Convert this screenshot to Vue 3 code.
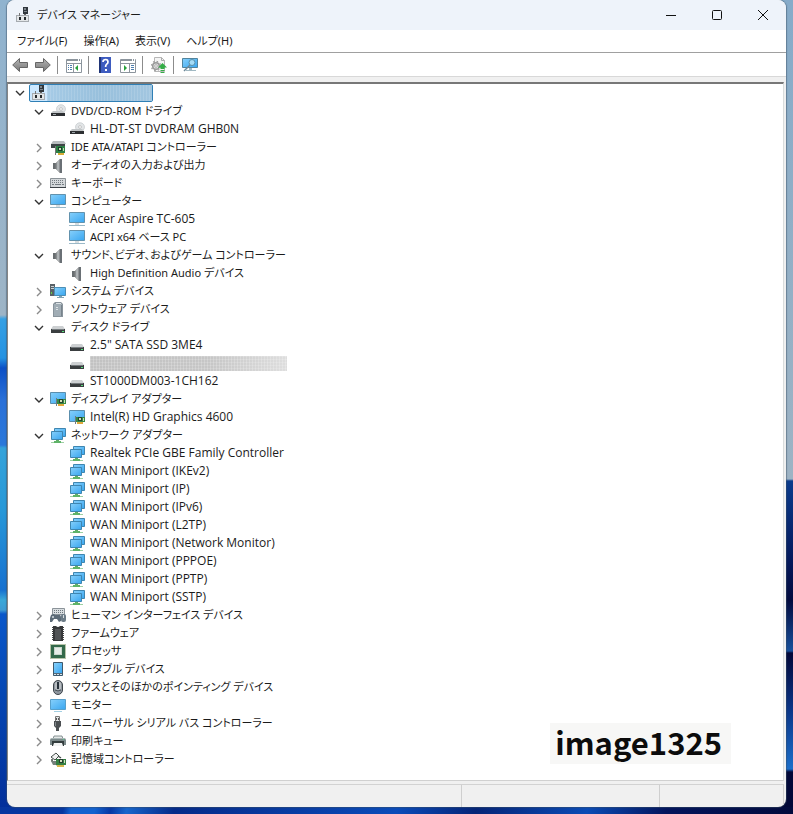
<script setup>
import { ref } from 'vue'

const menus = ['ファイル(F)', '操作(A)', '表示(V)', 'ヘルプ(H)']

const wan = ['IKEv2', 'IP', 'IPv6', 'L2TP', 'Network Monitor', 'PPPOE', 'PPTP', 'SSTP']

const groups = ref([
  { name: 'DVD/CD-ROM ドライブ', icon: 'optical', open: true, items: ['HL-DT-ST DVDRAM GHB0N'] },
  { name: 'IDE ATA/ATAPI コントローラー', icon: 'ide' },
  { name: 'オーディオの入力および出力', icon: 'speaker' },
  { name: 'キーボード', icon: 'keyboard' },
  { name: 'コンピューター', icon: 'computer', open: true, items: ['Acer Aspire TC-605', 'ACPI x64 ベース PC'] },
  { name: 'サウンド、ビデオ、およびゲーム コントローラー', icon: 'speaker', open: true, items: ['High Definition Audio デバイス'] },
  { name: 'システム デバイス', icon: 'system' },
  { name: 'ソフトウェア デバイス', icon: 'software' },
  { name: 'ディスク ドライブ', icon: 'disk', open: true, items: ['2.5" SATA SSD 3ME4', '', 'ST1000DM003-1CH162'] },
  { name: 'ディスプレイ アダプター', icon: 'display', open: true, items: ['Intel(R) HD Graphics 4600'] },
  {
    name: 'ネットワーク アダプター',
    icon: 'network',
    open: true,
    items: ['Realtek PCIe GBE Family Controller', ...wan.map((n) => `WAN Miniport (${n})`)],
  },
  { name: 'ヒューマン インターフェイス デバイス', icon: 'hid' },
  { name: 'ファームウェア', icon: 'firmware' },
  { name: 'プロセッサ', icon: 'cpu' },
  { name: 'ポータブル デバイス', icon: 'portable' },
  { name: 'マウスとそのほかのポインティング デバイス', icon: 'mouse' },
  { name: 'モニター', icon: 'monitor' },
  { name: 'ユニバーサル シリアル バス コントローラー', icon: 'usb' },
  { name: '印刷キュー', icon: 'printer' },
  { name: '記憶域コントローラー', icon: 'storage' },
])

const rootOpen = ref(true)

// Purely Latin names are set one size larger than Japanese ones.
const isLatin = (text) => /^[\x20-\x7e]+$/.test(text)
</script>

<template>
  <svg class="defs" aria-hidden="true">
    <defs>
      <linearGradient id="screen" x1="0" y1="0" x2="1" y2="1">
        <stop offset="0" stop-color="#86d0fb" /><stop offset="1" stop-color="#39a6f0" />
      </linearGradient>
      <linearGradient id="metal" x1="0" y1="0" x2="1" y2="0">
        <stop offset="0" stop-color="#6c7174" /><stop offset=".5" stop-color="#c3c8ca" /><stop offset="1" stop-color="#777c80" />
      </linearGradient>
      <linearGradient id="arrow" x1="0" y1="0" x2="0" y2="1">
        <stop offset="0" stop-color="#b5b5b5" /><stop offset="1" stop-color="#777" />
      </linearGradient>
      <symbol id="manager" viewBox="0 0 16 16">
        <path d="M8 0h5v7H8z" fill="#30363c" /><path d="M9 1h2v2H9zM9 4h3v1H9z" fill="#7d858c" /><path d="M9 7h2v2H9z" fill="#666" />
        <path d="M1 8h13v7H1z" fill="#e3e6e8" /><path d="M1 8h13v1H1zM1 14h13v1H1zM1 8h1v7H1zM13 8h1v7h-1z" fill="#a6abb0" />
        <path d="M4 10h2v3H4zM9 10h2v3H9z" fill="#24292d" /><path d="M4 6h1v3H4z" fill="#777" />
      </symbol>
      <symbol id="optical" viewBox="0 0 16 16">
        <ellipse cx="11" cy="5" rx="4.500" ry="4.300" fill="#e2e5e7" stroke="#c4c9cc" stroke-width=".7" />
        <circle cx="11" cy="5" r="1.400" fill="#fff" stroke="#999" stroke-width=".5" />
        <path d="M3 7h10l2 2H1z" fill="#c2c6c8" /><path d="M1 9h14v3H1z" fill="#2c2f32" /><path d="M3 10h3v1H3z" fill="#9da4a8" />
      </symbol>
      <symbol id="ide" viewBox="0 0 16 16">
        <path d="M3 1h11l2 3H1z" fill="#b9bdbf" /><path d="M1 4h14v4H1z" fill="#3e4547" />
        <path d="M6 6h9v7H6z" fill="#2b8144" /><path d="M8 7h4v4H8z" fill="#1a3e29" /><path d="M9 8h2v2H9zM13 8h1v3h-1z" fill="#c9dbb7" />
        <path d="M8 13h6v2H8z" fill="#d7ac36" /><path d="M5 6h1v9H5z" fill="#777" />
      </symbol>
      <symbol id="speaker" viewBox="0 0 16 16">
        <path d="M3 5h3v6H3z" fill="#686d70" /><path d="M6 5l4-4v14l-4-4z" fill="url(#metal)" stroke="#999" stroke-width=".5" />
        <path d="M10 1h2v14h-2z" fill="#6a7075" />
      </symbol>
      <symbol id="keyboard" viewBox="0 0 16 16">
        <path d="M.5 2.500h15v9H.5z" fill="#d4d8db" stroke="#8b9297" />
        <path d="M2 4.500h12M2 6.500h12" stroke="#737b81" stroke-dasharray="1 1" /><path d="M2 8.500h2M5 8.500h6M12 8.500h2" stroke="#737b81" />
        <path d="M0 11h16v1H0z" fill="#3d4349" />
      </symbol>
      <symbol id="computer" viewBox="0 0 16 16">
        <path d="M.5.500h15v10H.5z" fill="url(#screen)" stroke="#6292ad" /><path d="M6 11h4v2H6z" fill="#d7dde0" /><path d="M0 13h16v1H0z" fill="#9bb9c8" />
      </symbol>
      <symbol id="system" viewBox="0 0 16 16">
        <path d="M0 0h5v12H0z" fill="#596167" /><path d="M1 2h3v1H1zM1 4h3v1H1z" fill="#c9d0d3" /><path d="M1 8h1v2H1z" fill="#62cf48" />
        <path d="M4.500 3.500h11v8h-11z" fill="url(#screen)" stroke="#4d8fb5" /><path d="M9 12h3v1H9zM7 13h7v1H7z" fill="#82a4b5" />
      </symbol>
      <symbol id="software" viewBox="0 0 16 16">
        <path d="M5 0h6l2 2v13H3V2z" fill="#89949c" /><path d="M4 2h8v12H4z" fill="#a1adb5" /><path d="M6 1h5v1H6zM6 5h2v1H6zM6 7h2v1H6z" fill="#dce2e5" /><path d="M11 3h1v11h-1z" fill="#77838c" />
      </symbol>
      <symbol id="disk" viewBox="0 0 16 16">
        <path d="M3 6h10l2 3H1z" fill="#cdd0d2" /><path d="M1 9h14v4H1z" fill="#3a3e40" /><path d="M2 9h12v1H2z" fill="#757b7e" /><path d="M12 11h2v1h-2z" fill="#57df7a" />
      </symbol>
      <symbol id="display" viewBox="0 0 16 16">
        <path d="M.5.500h15v11H.5z" fill="url(#screen)" stroke="#5a8ead" /><path d="M6 6h1v8H6z" fill="#717b82" />
        <path d="M7 7h9v5H7z" fill="#348945" /><path d="M9 7h4v4H9z" fill="#24452f" /><path d="M10 8h2v2h-2zM14 8h1v3h-1z" fill="#cedfb7" /><path d="M8 12h6v2H8z" fill="#dfa83a" />
      </symbol>
      <symbol id="network" viewBox="0 0 16 16">
        <path d="M4.500.500h11v8h-11z" fill="url(#screen)" stroke="#3f86b0" /><path d="M1.500 3.500h11v8h-11z" fill="url(#screen)" stroke="#3f86b0" />
        <path d="M6 12h3v2H6z" fill="#5fae64" /><path d="M1 14h13v1H1z" fill="#9dd0a3" /><path d="M4 13h7v2H4z" fill="#5fb368" />
      </symbol>
      <symbol id="hid" viewBox="0 0 16 16">
        <path d="M2.500.500h12v6h-12z" fill="#d9dee1" stroke="#8b9399" /><path d="M4 2.500h10M4 4.500h10" stroke="#6d767d" stroke-dasharray="1 1" />
        <path d="M1 7q3-2 4 0h3q3-1 3 3v3l-2 1-2-3H4l-2 3H0v-4z" fill="#5c6b78" /><circle cx="3" cy="9" r="1" fill="#d5dde2" /><rect x="11" y="6" width="5" height="8" rx="2" fill="#6c7c88" /><path d="M13 7h1v3h-1z" fill="#d8dde0" />
      </symbol>
      <symbol id="firmware" viewBox="0 0 16 16">
        <path d="M2 1.500h12M2 3.500h12M2 5.500h12M2 7.500h12M2 9.500h12M2 11.500h12M2 13.500h12" stroke="#444" /><path d="M3 0h3q2 2 4 0h3v15H3z" fill="#36383a" /><path d="M5 3h6v11H5z" fill="#515456" />
      </symbol>
      <symbol id="cpu" viewBox="0 0 16 16">
        <path d="M1 1h14v13H1z" fill="#33694a" /><path d="M.5.500h15v14H.5z" fill="none" stroke="#6f8a55" stroke-dasharray="1 1" /><path d="M4 3h8v8H4z" fill="#c8d6cb" /><path d="M5 4h6v6H5z" fill="#e6ece7" />
      </symbol>
      <symbol id="portable" viewBox="0 0 16 16">
        <path d="M3.500.500h9v13h-9z" fill="#526879" stroke="#3e596c" /><path d="M4 1h8v10H4z" fill="url(#screen)" /><path d="M4 12h2v1H4zM7 12h2v1H7zM10 12h2v1h-2z" fill="#d6e4eb" />
      </symbol>
      <symbol id="mouse" viewBox="0 0 16 16">
        <rect x="3.500" y=".5" width="9" height="14" rx="4.500" fill="#8f979f" stroke="#3e454b" /><path d="M5 3q3-3 6 0v6q-3 2-6 0z" fill="#b8bdc1" /><path d="M7 2h2v7H7z" fill="#27313a" /><path d="M5 10q3 2 6 0" fill="none" stroke="#4a535a" />
      </symbol>
      <symbol id="monitor" viewBox="0 0 16 16">
        <path d="M.5 1.500h15v10H.5z" fill="url(#screen)" stroke="#58a0cb" /><path d="M4 13h8v1H4z" fill="#a3cfe2" />
      </symbol>
      <symbol id="usb" viewBox="0 0 16 16">
        <path d="M5.500.500h4v5h-4z" fill="#e0e3e4" stroke="#777" /><path d="M6 2h1v2H6zM8 2h1v2H8z" fill="#555" /><path d="M4 5h7v5l-2 2v3H6v-3l-2-2z" fill="#4b4f52" /><path d="M5 6h1v4H5z" fill="#83898d" />
      </symbol>
      <symbol id="printer" viewBox="0 0 16 16">
        <path d="M4 2h8l1 3H3z" fill="#e5e8e8" stroke="#6d7b7c" stroke-width=".8" /><path d="M1 4h14l1 2v5H0V6z" fill="#7b898a" /><path d="M1 4h14v1H1z" fill="#a9b6b6" /><path d="M2 7h12v5H2z" fill="#333d3e" /><path d="M4 9h8l1 3H3z" fill="#f1f3f3" /><path d="M13 5h1v1h-1z" fill="#55c884" />
      </symbol>
      <symbol id="storage" viewBox="0 0 16 16">
        <path d="M1 5l5-4 3 3-4 4z" fill="#f1f2f2" stroke="#444d49" /><path d="M2 7v2l5 4M8 4l3 2" fill="none" stroke="#444d49" stroke-width="1.500" /><path d="M1 9h6v4H3z" fill="#75807b" />
        <path d="M6 7h10v6H6z" fill="#347f43" /><path d="M9 7h4v4H9z" fill="#263c2e" /><path d="M10 8h2v2h-2zM14 8h1v3h-1z" fill="#d1ddc0" /><path d="M7 13h7v2H7z" fill="#d7b64d" />
      </symbol>
      <symbol id="back" viewBox="0 0 16 16">
        <path d="M.7 8L7.500 1.500v4h8v5h-8v4z" fill="url(#arrow)" stroke="#666" stroke-linejoin="round" />
      </symbol>
      <symbol id="forward" viewBox="0 0 16 16">
        <path d="M15.300 8L8.500 1.500v4h-8v5h8v4z" fill="url(#arrow)" stroke="#666" stroke-linejoin="round" />
      </symbol>
      <symbol id="tree-pane" viewBox="0 0 16 16">
        <path d="M.5 2.500h15v13H.5z" fill="#fff" stroke="#8c959d" /><path d="M1 3h14v1H1zM1 6h14v1H1z" fill="#8c959d" /><path d="M12 2h1v2h-1zM14 2h1v2h-1z" fill="#fff" /><path d="M2 8.500h4M2 10.500h4M2 12.500h4" stroke="#4d7fae" stroke-dasharray="1 1 3" /><path d="M7 7h1v8H7z" fill="#8c959d" /><path d="M12 8v6l-3-3z" fill="#28a13c" />
      </symbol>
      <symbol id="action-pane" viewBox="0 0 16 16">
        <path d="M.5 2.500h15v13H.5z" fill="#fff" stroke="#8c959d" /><path d="M1 3h14v1H1zM1 6h14v1H1z" fill="#8c959d" /><path d="M12 2h1v2h-1zM14 2h1v2h-1z" fill="#fff" /><path d="M11 8.500h4M11 10.500h4M11 12.500h4" stroke="#4d7fae" stroke-dasharray="3 1" /><path d="M9 7h1v8H9z" fill="#8c959d" /><path d="M4 8v6l3-3z" fill="#28a13c" />
      </symbol>
      <symbol id="help" viewBox="0 0 16 16">
        <path d="M2 0h12v16H2z" fill="#3e5cc0" /><path d="M2 0h2v16H2z" fill="#203577" /><path d="M6 5q0-2.500 2.700-2.500Q11 2.500 11 5q0 1.500-1.500 2.300Q8.600 8 8.600 10" fill="none" stroke="#fff" stroke-width="1.700" /><path d="M8 12h2v2H8z" fill="#fff" />
      </symbol>
      <symbol id="update" viewBox="0 0 16 16">
        <path d="M3.500.500h7l3 3v11h-10z" fill="#f5f5f5" stroke="#b7b7b7" /><path d="M10.500.500v3h3" fill="none" stroke="#aaa" />
        <circle cx="5" cy="9" r="3.300" fill="#ddd" stroke="#999" stroke-width="1.500" /><circle cx="5" cy="9" r="4.700" fill="none" stroke="#999" stroke-width="1.200" stroke-dasharray="1.500 2.200" /><circle cx="5" cy="9" r="1.300" fill="#fff" stroke="#888" stroke-width=".6" />
        <path d="M11.500 6l4.500 4.500h-2.500V12h-4v-1.500H7zM9.500 13h4v1h-4zM9.500 15h4v1h-4z" fill="#35ad47" />
      </symbol>
      <symbol id="scan" viewBox="0 0 16 16">
        <path d="M.5 1.500h15v9H.5z" fill="url(#screen)" stroke="#52849d" /><path d="M7 11h3v2H7zM4 13h10v1H4z" fill="#a0b8c2" /><circle cx="10" cy="5.500" r="3" fill="#a5dcf7" stroke="#5791ac" /><path d="M8 8l-6 6" stroke="#6d8897" stroke-width="1.500" />
      </symbol>
    </defs>
  </svg>

  <div class="desktop">
    <main class="window">
      <header class="titlebar">
        <svg class="icon"><use href="#manager" /></svg>
        <h1>デバイス マネージャー</h1>
        <button class="caption" aria-label="最小化"><svg viewBox="0 0 12 12"><path d="M1 6.500h10" /></svg></button>
        <button class="caption" aria-label="最大化"><svg viewBox="0 0 12 12"><rect x="1.500" y="1.500" width="9" height="9" rx="1" /></svg></button>
        <button class="caption" aria-label="閉じる"><svg viewBox="0 0 12 12"><path d="M1 1l10 10M11 1L1 11" /></svg></button>
      </header>

      <nav class="menubar">
        <button v-for="m in menus" :key="m">{{ m }}</button>
      </nav>

      <div class="toolbar" role="toolbar">
        <button aria-label="戻る"><svg class="icon"><use href="#back" /></svg></button>
        <button aria-label="進む"><svg class="icon"><use href="#forward" /></svg></button>
        <span class="sep"></span>
        <button aria-label="コンソール ツリーの表示"><svg class="icon"><use href="#tree-pane" /></svg></button>
        <span class="sep"></span>
        <button aria-label="ヘルプ"><svg class="icon"><use href="#help" /></svg></button>
        <button aria-label="操作ウィンドウの表示"><svg class="icon"><use href="#action-pane" /></svg></button>
        <span class="sep"></span>
        <button aria-label="ドライバーの更新"><svg class="icon"><use href="#update" /></svg></button>
        <span class="sep"></span>
        <button aria-label="ハードウェア変更のスキャン"><svg class="icon"><use href="#scan" /></svg></button>
      </div>

      <section class="pane">
        <div class="row">
          <button class="toggle" aria-label="コンピューター" :aria-expanded="rootOpen" @click="rootOpen = !rootOpen">
            <svg :class="{ open: rootOpen }" viewBox="0 0 10 10"><path d="M3 1l4 4-4 4" /></svg>
          </button>
          <span class="root"><svg class="icon"><use href="#manager" /></svg><span class="root-mask"></span></span>
        </div>
        <ul v-if="rootOpen" class="tree">
          <li v-for="g in groups" :key="g.name">
            <div class="row group">
              <button class="toggle" :aria-label="g.name" :aria-expanded="!!g.open" @click="g.open = !g.open">
                <svg :class="{ open: g.open }" viewBox="0 0 10 10"><path d="M3 1l4 4-4 4" /></svg>
              </button>
              <svg class="icon"><use :href="'#' + g.icon" /></svg>
              <span class="label">{{ g.name }}</span>
            </div>
            <ul v-if="g.open" class="tree">
              <li v-for="(item, i) in g.items" :key="i" class="row item">
                <svg class="icon"><use :href="'#' + g.icon" /></svg>
                <span v-if="item" class="label" :class="{ latin: isLatin(item) }">{{ item }}</span>
                <span v-else class="item-mask"></span>
              </li>
            </ul>
          </li>
        </ul>
        <p class="stamp">image1325</p>
      </section>

      <footer class="status"><span></span><span></span><span></span></footer>
    </main>
  </div>
</template>

<style>
body {
  margin: 0;
}
</style>

<style scoped>
* {
  box-sizing: border-box;
}
.defs {
  position: absolute;
  width: 0;
  height: 0;
}
.desktop {
  display: flex;
  min-height: 100vh;
  padding: 0 7px 7px;
  font: 11px/18px "Noto Sans", "Noto Sans CJK JP", sans-serif;
  font-feature-settings: "palt";
  color: #1b1b1b;
  background:
    linear-gradient(100deg, #0636a0 0 8%, #1262cf 9% 12%, #0638a5 14%, #1766cc 16%, #052a89 22%, #0a4bb9 50%, #052477 60%, #0b4bb5 74%, #03145c 84%, #020a3c) bottom / 100% 7px no-repeat,
    linear-gradient(#90b3cf 0, #9db4c6 315px, #35a0e4 319px, #2492e2 358px, #0b4fc6 368px, #2a70d8 400px, #2b78da 445px, #35a3da 448px, #2798d8 510px, #1771d0 590px, #3aa8d8 600px, #3d9bd4 610px, #0a57ca 614px, #0648b4 690px, #022e9a 814px) left / 50% 100% no-repeat,
    linear-gradient(#86abc9 0, #9db3c4 479px, #0a3b8c 481px, #04195c 560px, #020a3e 600px, #17509c 651px, #020738 653px, #0a3588 710px, #1c6fca 769px, #020838 772px) right / 50% 100% no-repeat;
}
.window {
  display: flex;
  flex: 1;
  flex-direction: column;
  min-width: 0;
  overflow: hidden;
  background: #f0f0f0;
  border-radius: 8px;
  box-shadow: 0 0 1px 1px rgba(60, 80, 100, 0.5);
}
button {
  padding: 0;
  border: 0;
  background: none;
  color: inherit;
  font: inherit;
  font-feature-settings: inherit;
}
.icon {
  flex: none;
  width: 16px;
  height: 16px;
}
.titlebar {
  display: flex;
  align-items: center;
  height: 30px;
  padding-left: 8px;
  background: #eef3fa;
}
h1 {
  flex: 1;
  margin: 0 0 0 6px;
  font-size: 11px;
  font-weight: 400;
}
.caption {
  display: grid;
  place-items: center;
  width: 46px;
  height: 28px;
}
.caption svg {
  width: 12px;
  height: 12px;
  fill: none;
  stroke: #111;
}
.menubar {
  display: flex;
  height: 23px;
  padding-left: 2px;
  border-bottom: 1px solid #a0a0a0;
  background: #fff;
}
.menubar button {
  padding: 0 8px;
}
.toolbar {
  display: flex;
  align-items: center;
  height: 24px;
  padding-left: 1px;
  border-bottom: 1px solid #d8d8d8;
  background: #fff;
}
.toolbar button {
  display: grid;
  place-items: center;
  width: 23px;
  height: 24px;
}
.sep {
  width: 8px;
  height: 18px;
  border-left: 1px solid #8c8c8c;
  margin-left: 3px;
  margin-right: -3px;
}
.pane {
  position: relative;
  flex: 1;
  margin: 5px 2px 0 0;
  padding: 0 0 12px;
  border-top: 2px solid #777;
  border-left: 1px solid #858585;
  border-right: 1px solid #d9dcdc;
  border-bottom: 1px solid #d0d0d0;
  background: #fff;
}
.tree {
  margin: 0;
  padding: 0;
  list-style: none;
}
.row {
  display: flex;
  align-items: center;
  height: 18px;
  padding-left: 6px;
}
.group {
  padding-left: 25px;
}
.item {
  padding-left: 61px;
}
.group .icon,
.item .icon {
  margin-top: 2px;
}
.toggle {
  display: grid;
  place-items: center;
  width: 11px;
  height: 18px;
  margin-right: 4px;
}
.group .toggle {
  height: 16px;
  margin-top: 2px;
  margin-right: 6px;
}
.toggle svg {
  width: 10px;
  height: 10px;
  fill: none;
  stroke: #8a8a8a;
  stroke-width: 1.4;
}
.toggle svg.open {
  transform: rotate(90deg);
  stroke: #333;
}
.label {
  margin-left: 5px;
  white-space: nowrap;
}
.latin {
  font-family: "Open Sans", sans-serif;
  font-size: 12px;
}
.root {
  display: flex;
  align-items: center;
  width: 124px;
  height: 18px;
  padding-left: 1px;
  border: 1px solid #2f7fb5;
  border-radius: 2px;
  background: #cce8ff;
}
.root-mask {
  flex: 1;
  height: 16px;
  background:
    repeating-linear-gradient(90deg, rgba(255, 255, 255, 0.12) 0 1px, transparent 1px 3px),
    linear-gradient(90deg, #a6cbe6, #98c0dc 50%, #a2c6e0);
}
.item-mask {
  width: 197px;
  height: 15px;
  margin-left: 5px;
  background:
    repeating-linear-gradient(90deg, rgba(255, 255, 255, 0.2) 0 1px, transparent 1px 3px),
    repeating-linear-gradient(rgba(255, 255, 255, 0.15) 0 1px, transparent 1px 3px),
    linear-gradient(90deg, #c2c2c2, #c6c6c6 60%, #dedede);
}
.stamp {
  position: absolute;
  right: 52px;
  bottom: 16px;
  margin: 0;
  padding: 0 9px 4px 5px;
  background: #f7f7f6;
  color: #0c0c0c;
  font: 700 31px/37px "Noto Sans CJK JP", sans-serif;
}
.status {
  display: grid;
  grid-template-columns: 456fr 198fr 124fr;
  height: 26px;
  padding: 3px 2px 0 0;
}
.status span {
  border-top: 1px solid #d2d2d2;
  border-right: 1px solid #cfcfcf;
}
</style>
